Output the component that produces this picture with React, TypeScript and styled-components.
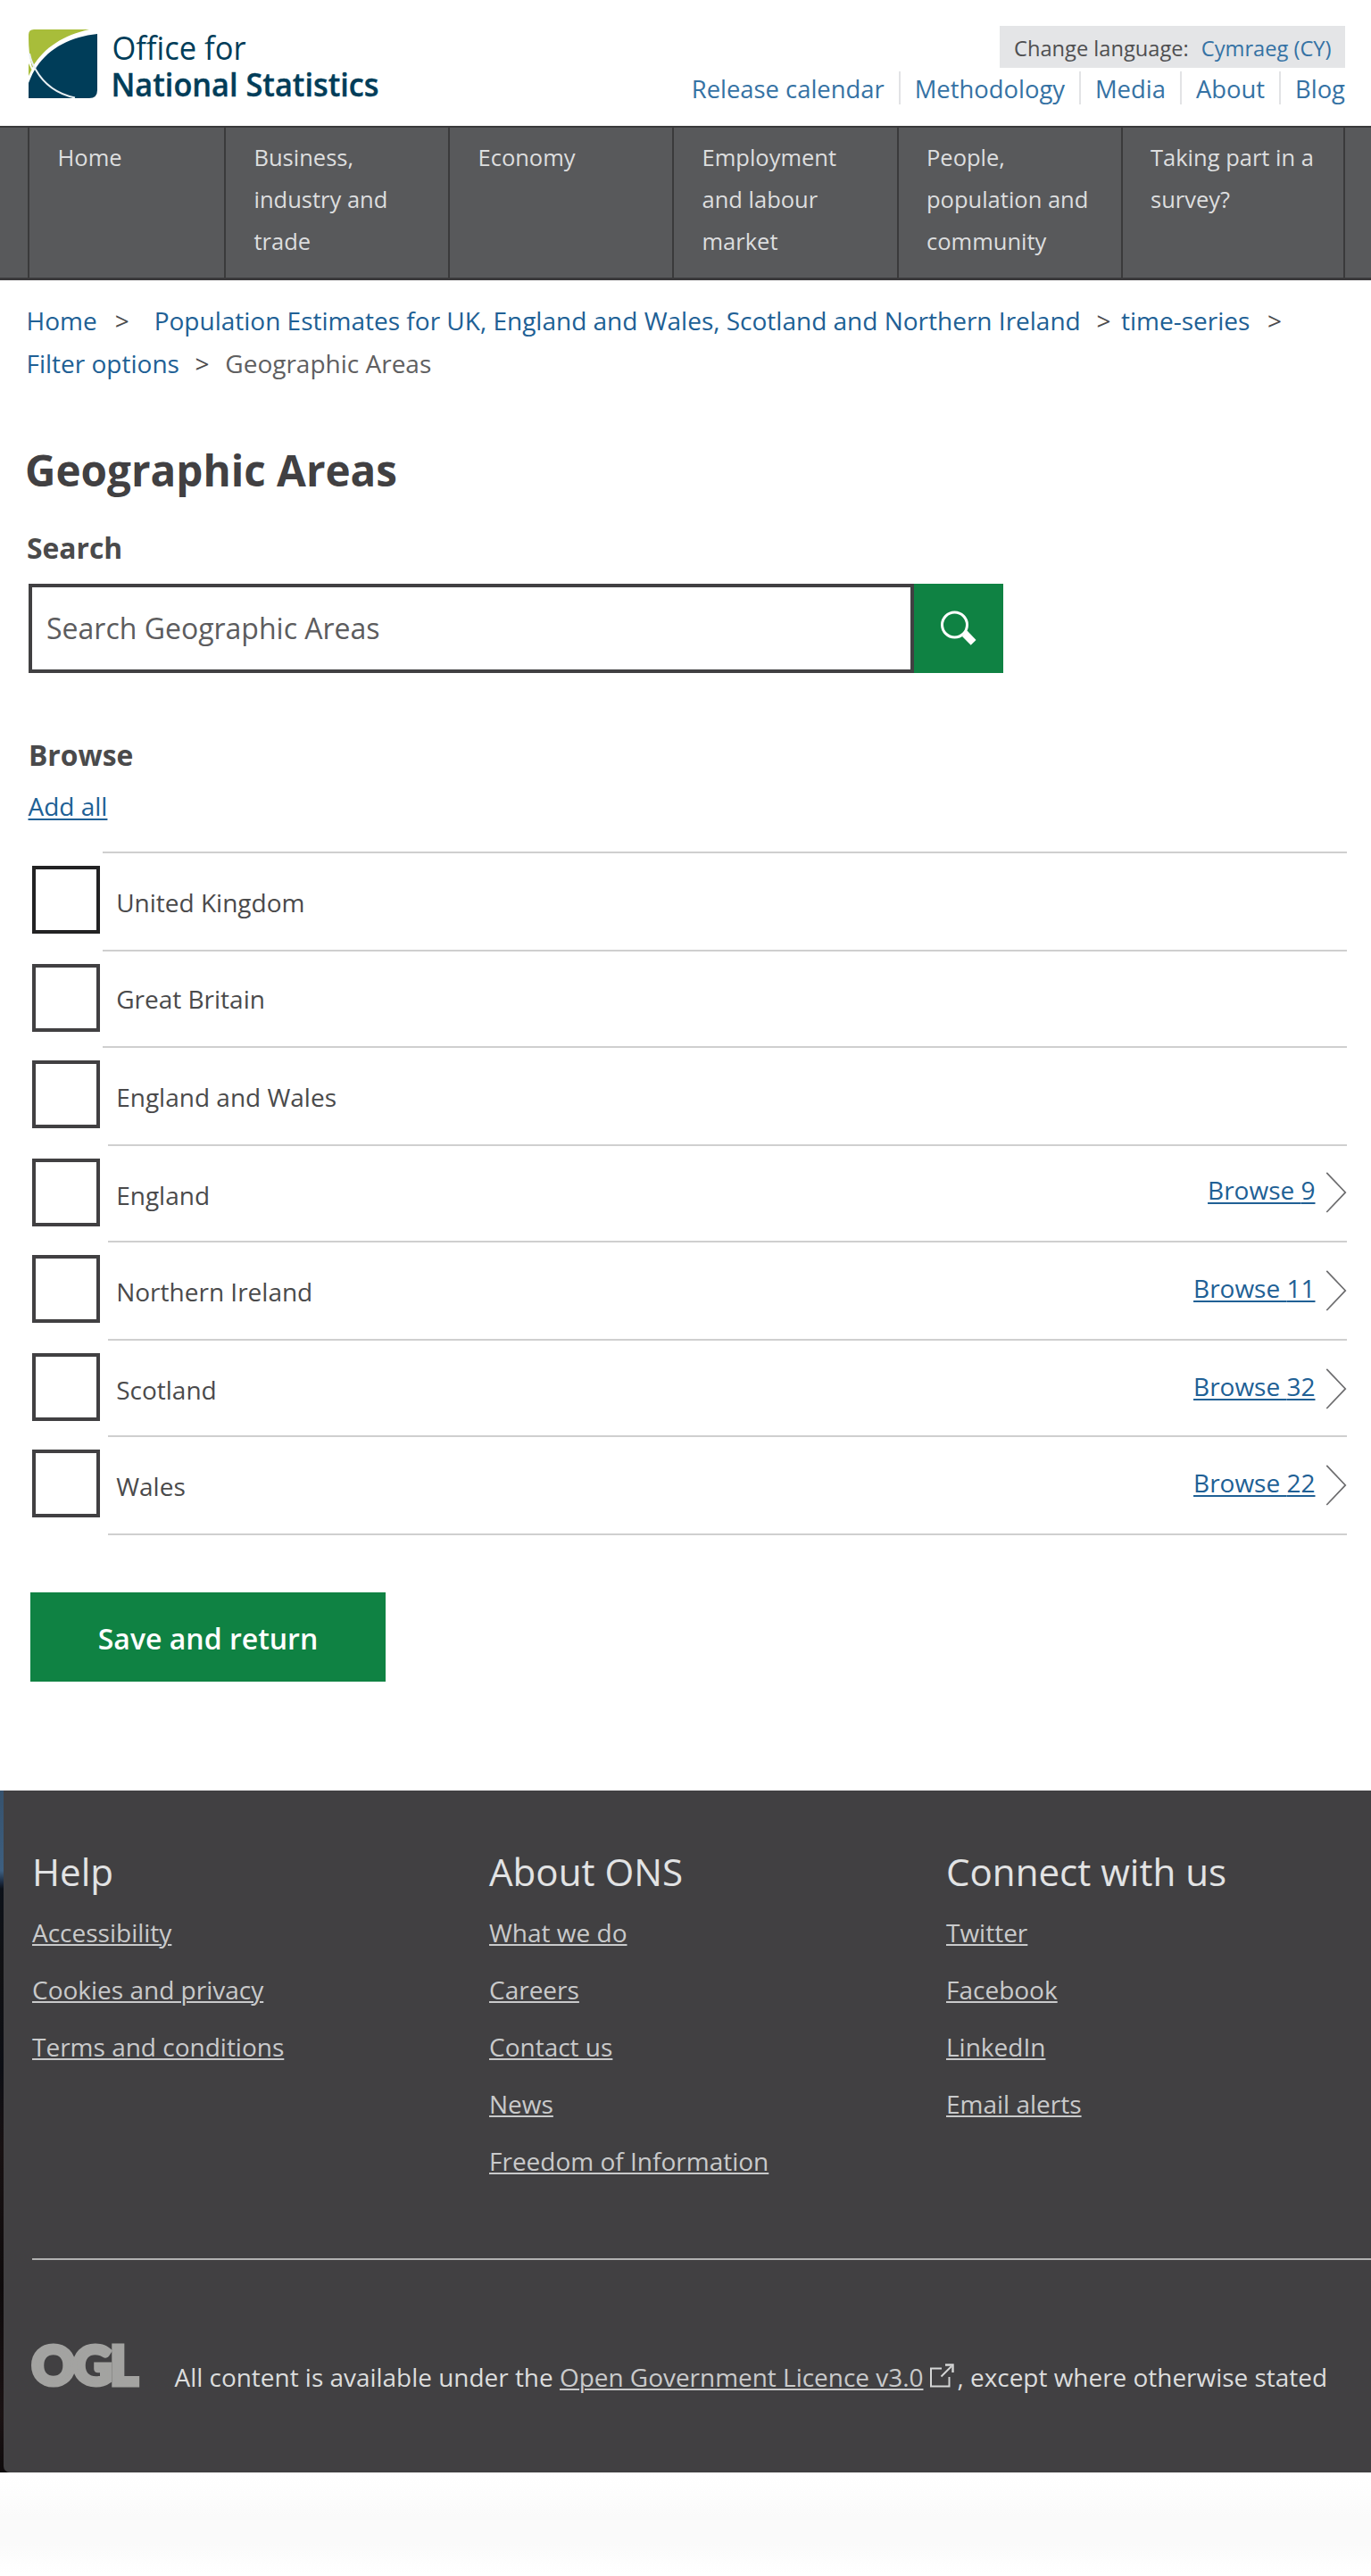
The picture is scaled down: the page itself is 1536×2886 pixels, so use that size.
import React from 'react';
import styled, { createGlobalStyle } from 'styled-components';

const GlobalStyle = createGlobalStyle`
  *, *::before, *::after { box-sizing: border-box; }
  body {
    margin: 0;
    background: #fff;
    color: #414042;
    font-family: 'Open Sans', 'Noto Sans', sans-serif;
    font-size: 28px;
    line-height: 40px;
  }
  a { color: inherit; }
  ul, ol { list-style: none; margin: 0; padding: 0; }
`;

const Page = styled.div`
  width: 1536px;
  min-height: 2886px;
  display: flex;
  flex-direction: column;
`;

/* ---------- Masthead ---------- */

const Masthead = styled.header`
  height: 141px;
  padding: 29px 29px 0 32px;
  display: flex;
  justify-content: space-between;
`;

const Logo = styled.svg`
  display: block;
  margin-top: 4px;
  overflow: visible;
`;

const Secondary = styled.div`
  display: flex;
  flex-direction: column;
  align-items: flex-end;
  color: #3572a4;
`;

const Language = styled.p`
  margin: 0;
  height: 47px;
  padding: 0 15.5px 0 16px;
  display: flex;
  gap: 14px;
  background: #e4e5e7;
  font-size: 23.65px;
  line-height: 50px;
  a { text-decoration: none; }
`;

const LanguageLabel = styled.span`
  color: #4f4f51;
`;

const TopLinks = styled.ul`
  display: flex;
  margin-top: 4px;
`;

const TopLink = styled.li`
  height: 37px;
  padding: 0 16px;
  font-size: 27.4px;
  line-height: 39px;
  border-left: 2px solid #e2e3e5;
  &:first-child { border-left: 0; padding-left: 0; }
  &:last-child { padding-right: 0; }
  a { text-decoration: none; }
`;

/* ---------- Primary navigation ---------- */

const PrimaryNav = styled.nav`
  height: 173px;
  padding-left: 31px;
  display: flex;
  background: #58595b;
  border-top: 2px solid #3a3a3b;
  border-bottom: 3px solid #3a393b;
`;

const NavItem = styled.a<{ $width: number }>`
  width: ${(p) => p.$width}px;
  padding: 10px 8px 0 31.5px;
  border-left: 2px solid #3a3a3b;
  color: #dddedf;
  font-size: 25.5px;
  line-height: 47px;
  text-decoration: none;
  white-space: pre-line;
  &:last-child { border-right: 2px solid #3a3a3b; }
`;

/* ---------- Main ---------- */

const Main = styled.main`
  padding: 21px 27px 0 28.5px;
`;

const CrumbLine = styled.ol`
  display: flex;
  height: 48px;
  padding-left: 1px;
  line-height: 48px;
  white-space: nowrap;
`;

const Crumb = styled.li<{ $current?: boolean }>`
  color: ${(p) => (p.$current ? '#5f5f61' : '#206095')};
  a { text-decoration: none; }
`;

const Separator = styled.li<{ $before: number; $after: number }>`
  margin: 0 ${(p) => p.$after}px 0 ${(p) => p.$before}px;
  color: #4a4a4c;
`;

const Title = styled.h1`
  margin: 64px 0 0 -0.5px;
  font-size: 47.6px;
  line-height: 64px;
  font-weight: 700;
`;

const SectionTitle = styled.h2<{ $top: number; $indent?: number }>`
  margin: ${(p) => p.$top}px 0 0 ${(p) => p.$indent ?? 0}px;
  color: #4a4a4b;
  font-size: 31.8px;
  line-height: 44px;
  font-weight: 700;
`;

const SearchForm = styled.form`
  display: flex;
  margin: 18px 0 0 3.5px;
  height: 100px;
`;

const SearchInput = styled.input`
  width: 992px;
  height: 100px;
  padding: 0 17px 1px 16px;
  border: 4px solid #414042;
  border-radius: 0;
  background: #fff;
  font: 400 32px/44px 'Open Sans', sans-serif;
  outline: 0;
  &::placeholder { color: #5c5c5e; opacity: 1; }
`;

const SearchButton = styled.button`
  width: 100px;
  height: 100px;
  padding: 0;
  border: 0;
  display: flex;
  align-items: center;
  justify-content: center;
  background: #0f8243;
`;

const TextLink = styled.a`
  color: #206095;
  text-decoration: underline;
  text-decoration-thickness: 2px;
  text-underline-offset: 3px;
`;

const AddAll = styled.div`
  margin: 15px 0 0 3px;
`;

const AreaList = styled.ul`
  margin-top: 31px;
  padding-left: 7.5px;
`;

const AreaRow = styled.li<{ $height: number }>`
  display: flex;
  height: ${(p) => p.$height}px;
`;

const Checkbox = styled.input<{ $strong?: boolean }>`
  appearance: none;
  flex: none;
  width: 76px;
  height: 76px;
  margin: 16px 0 0;
  border: 4px solid ${(p) => (p.$strong ? '#222223' : '#414042')};
  background: #fff;
`;

const AreaBody = styled.div<{ $inset: number; $last?: boolean }>`
  flex: 1;
  display: flex;
  align-items: flex-start;
  justify-content: space-between;
  margin-left: ${(p) => p.$inset}px;
  padding-left: ${(p) => 18.2 - p.$inset}px;
  border-top: 2px solid #cfcfcf;
  border-bottom: ${(p) => (p.$last ? '2px solid #cfcfcf' : '0')};
`;

const AreaName = styled.label<{ $top: number }>`
  padding-top: ${(p) => p.$top}px;
  color: #4a4a4b;
`;

const BrowseGroup = styled.div<{ $top: number }>`
  display: flex;
  gap: 11px;
  padding: ${(p) => p.$top}px 0.5px 0 0;
  svg { display: block; }
`;

const SaveButton = styled.button`
  display: block;
  width: 398px;
  height: 100px;
  margin: 64px 0 0 5.5px;
  padding: 3px 0 0;
  border: 0;
  background: #0f8243;
  color: #fff;
  font: 600 32px/44px 'Open Sans', sans-serif;
`;

/* ---------- Footer ---------- */

const FooterBackdrop = styled.div`
  margin-top: 122px;
  height: 764px;
  padding-left: 4px;
  background: linear-gradient(#36526d 0, #3d5f80 90px, #1b2a40 103px, #0c1119 110px, #111113 200px, #0c0e14 310px, #181112 400px, #0e0b0c 560px, #1a1213 700px, #0f0b0c 764px);
`;

const Footer = styled.footer`
  height: 764px;
  padding: 71px 0 0 32px;
  background: #414042;
  border-bottom-left-radius: 7px;
`;

const FooterColumns = styled.div`
  display: grid;
  grid-template-columns: repeat(3, 512px);
  height: 453px;
  margin-right: -36px;
`;

const FooterHeading = styled.h2`
  margin: 0 0 16px;
  color: #e2e3e4;
  font-size: 42.1px;
  line-height: 40px;
  font-weight: 400;
`;

const FooterItem = styled.li`
  height: 64px;
  line-height: 64px;
`;

const FooterLink = styled.a`
  color: #c9cacb;
  text-decoration: underline;
  text-decoration-thickness: 2px;
  text-underline-offset: 2px;
`;

const Licence = styled.div`
  display: flex;
  align-items: flex-start;
  padding-top: 92px;
  border-top: 2px solid #b1b1b1;
  color: #dcdddd;
  font-size: 27.95px;
  white-space: nowrap;
`;

const OglLogo = styled.svg`
  display: block;
  flex: none;
  margin-right: 39.5px;
  overflow: visible;
`;

const LicenceText = styled.p`
  margin: 19px 0 0;
  display: flex;
  white-space: pre;
  svg { margin: 5px 3px 0 8px; flex: none; }
`;

const PageEnd = styled.div`
  height: 116px;
  background: linear-gradient(#fff 0, #fefefe 15px, #fafafa 50px, #fafafa 80px, #fff 112px);
`;

/* ---------- Data ---------- */

const topLinks = ['Release calendar', 'Methodology', 'Media', 'About', 'Blog'];

const navItems = [
  { text: 'Home', width: 220 },
  { text: 'Business,\nindustry and\ntrade', width: 251 },
  { text: 'Economy', width: 251 },
  { text: 'Employment\nand labour\nmarket', width: 251.5 },
  { text: 'People,\npopulation and\ncommunity', width: 251 },
  { text: 'Taking part in a\nsurvey?', width: 251.5 },
];

const areas = [
  { name: 'United Kingdom', height: 110, inset: 3, nameTop: 35 },
  { name: 'Great Britain', height: 108, inset: 3, nameTop: 33 },
  { name: 'England and Wales', height: 110, inset: 3, nameTop: 35 },
  { name: 'England', height: 108, inset: 9, nameTop: 35, count: 9, browseTop: 29 },
  { name: 'Northern Ireland', height: 110, inset: 9, nameTop: 35, count: 11, browseTop: 31 },
  { name: 'Scotland', height: 108, inset: 9, nameTop: 35, count: 32, browseTop: 31 },
  { name: 'Wales', height: 112, inset: 9, nameTop: 35, count: 22, browseTop: 31 },
];

const footerColumns = [
  { title: 'Help', links: ['Accessibility', 'Cookies and privacy', 'Terms and conditions'] },
  { title: 'About ONS', links: ['What we do', 'Careers', 'Contact us', 'News', 'Freedom of Information'] },
  { title: 'Connect with us', links: ['Twitter', 'Facebook', 'LinkedIn', 'Email alerts'] },
];

/* ---------- Drawings ---------- */

const OnsLogo = () => (
  <Logo width="392" height="78" viewBox="0 0 392 78" role="img" aria-label="Office for National Statistics">
    <path d="M6 0H68C40 6 17 20 4 43C1 32 0 20 0 10V6Q0 0 6 0Z" fill="#a8bd3a" />
    <path d="M0 38L3.5 45L0 52Z" fill="#a8bd3a" />
    <path d="M77 5V68Q77 77 68 77H0V60C3 52 6 46 9 42C24 20 48 8 77 5Z" fill="#003d59" />
    <path d="M1 27Q3 37 8 45C17 61 31 72 52 76.5" fill="none" stroke="#e9f0f3" strokeWidth="2" />
    <text x="93.5" y="34" fontSize="37" fill="#003d59" textLength="150" lengthAdjust="spacingAndGlyphs">Office for</text>
    <text x="92.5" y="75" fontSize="36.5" fontWeight="600" fill="#003d59" stroke="#003d59" strokeWidth=".4" textLength="300" lengthAdjust="spacingAndGlyphs">National Statistics</text>
  </Logo>
);

const SearchIcon = () => (
  <svg width="40" height="40" viewBox="0 0 40 40" aria-hidden="true">
    <circle cx="15.5" cy="16" r="14" fill="none" stroke="#fff" strokeWidth="3" />
    <path d="M29.5 22.5L39.5 33L33.7 38.8L24 29Z" fill="#fff" />
  </svg>
);

const Chevron = () => (
  <svg width="24" height="46" viewBox="0 0 24 46" aria-hidden="true">
    <path d="M1.3 .8L22.3 22.9L1.3 45" fill="none" stroke="#6d6d6f" strokeWidth="1.7" />
  </svg>
);

const ExternalIcon = () => (
  <svg width="27" height="27" viewBox="0 0 27 27" fill="none" stroke="#d4d5d5" aria-hidden="true">
    <path d="M13 5.5H1V25.5H21.5V15" strokeWidth="2" />
    <path d="M12.5 14.5L24 3" strokeWidth="2" />
    <path d="M17 1.5H25.5V10" strokeWidth="2.4" />
  </svg>
);

const Ogl = () => (
  <OglLogo width="120" height="52" viewBox="0 0 120 52" role="img" aria-label="OGL">
    <text x="-.5" y="47.8" fontSize="60" fontWeight="900" fontFamily="Lato, sans-serif" fill="#a3a3a1" stroke="#a3a3a1" strokeWidth="5" textLength="119" lengthAdjust="spacing">OGL</text>
  </OglLogo>
);

export default function App() {
  return (
    <Page>
      <GlobalStyle />
      <Masthead>
        <OnsLogo />
        <Secondary>
          <Language>
            <LanguageLabel>Change language:</LanguageLabel>
            <a href="#cy">Cymraeg (CY)</a>
          </Language>
          <TopLinks>
            {topLinks.map((text) => (
              <TopLink key={text}><a href="#top">{text}</a></TopLink>
            ))}
          </TopLinks>
        </Secondary>
      </Masthead>

      <PrimaryNav>
        {navItems.map((item) => (
          <NavItem key={item.text} href="#nav" $width={item.width}>{item.text}</NavItem>
        ))}
      </PrimaryNav>

      <Main>
        <CrumbLine>
          <Crumb><a href="#home">Home</a></Crumb>
          <Separator $before={20} $after={28}>&gt;</Separator>
          <Crumb>
            <a href="#dataset">Population Estimates for UK, England and Wales, Scotland and Northern Ireland</a>
          </Crumb>
          <Separator $before={17.8} $after={11.4}>&gt;</Separator>
          <Crumb><a href="#series">time-series</a></Crumb>
          <Separator $before={19.7} $after={0}>&gt;</Separator>
        </CrumbLine>
        <CrumbLine>
          <Crumb><a href="#filter">Filter options</a></Crumb>
          <Separator $before={17.6} $after={17.8}>&gt;</Separator>
          <Crumb $current>Geographic Areas</Crumb>
        </CrumbLine>

        <Title>Geographic Areas</Title>

        <SectionTitle $top={33} $indent={1.5}>Search</SectionTitle>
        <SearchForm>
          <SearchInput placeholder="Search Geographic Areas" />
          <SearchButton type="button" aria-label="Search"><SearchIcon /></SearchButton>
        </SearchForm>

        <SectionTitle $top={70} $indent={3.5}>Browse</SectionTitle>
        <AddAll><TextLink href="#add">Add all</TextLink></AddAll>

        <AreaList>
          {areas.map((area, i) => (
            <AreaRow key={area.name} $height={area.height}>
              <Checkbox type="checkbox" id={`area-${i}`} $strong={i === 0} />
              <AreaBody $inset={area.inset} $last={i === areas.length - 1}>
                <AreaName htmlFor={`area-${i}`} $top={area.nameTop}>{area.name}</AreaName>
                {area.count && (
                  <BrowseGroup $top={area.browseTop}>
                    <TextLink href="#browse">Browse {area.count}</TextLink>
                    <Chevron />
                  </BrowseGroup>
                )}
              </AreaBody>
            </AreaRow>
          ))}
        </AreaList>

        <SaveButton type="button">Save and return</SaveButton>
      </Main>

      <FooterBackdrop>
        <Footer>
          <FooterColumns>
            {footerColumns.map((column) => (
              <section key={column.title}>
                <FooterHeading>{column.title}</FooterHeading>
                <ul>
                  {column.links.map((link) => (
                    <FooterItem key={link}><FooterLink href="#footer">{link}</FooterLink></FooterItem>
                  ))}
                </ul>
              </section>
            ))}
          </FooterColumns>
          <Licence>
            <Ogl />
            <LicenceText>
              <span>All content is available under the </span>
              <FooterLink href="#ogl">Open Government Licence v3.0</FooterLink>
              <ExternalIcon />
              <span>, except where otherwise stated</span>
            </LicenceText>
          </Licence>
        </Footer>
      </FooterBackdrop>
      <PageEnd />
    </Page>
  );
}
